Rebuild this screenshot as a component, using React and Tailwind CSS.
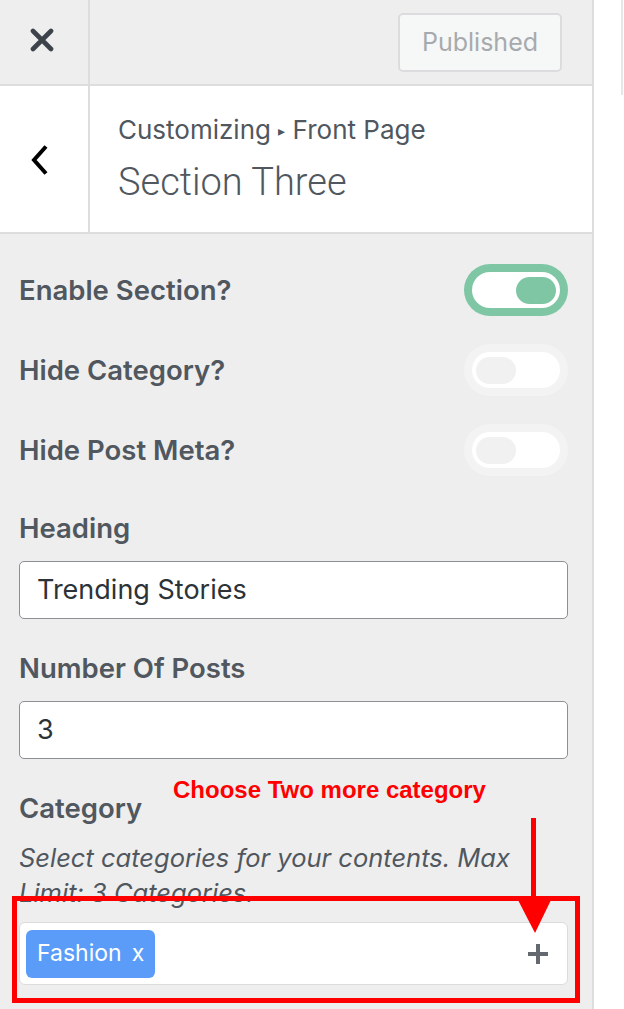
import React from "react";

const font = { fontFamily: "Inter, 'Noto Sans', sans-serif" };

const Toggle = ({ on }) => (
  <div
    className={`w-[104px] h-[52px] rounded-full p-2 shrink-0 ${
      on ? "bg-[#7ec6a4]" : "bg-[#f3f3f3]"
    }`}
  >
    <div
      className={`h-full w-full rounded-full bg-white flex items-center px-1 ${
        on ? "justify-end" : "justify-start"
      }`}
    >
      <div
        className={`w-10 h-[27px] rounded-full ${
          on ? "bg-[#7ec6a4]" : "bg-[#f1f1f1]"
        }`}
      />
    </div>
  </div>
);

const ToggleRow = ({ label, on }) => (
  <div className="flex items-center justify-between h-[52px]">
    <span className="text-[27.5px] leading-[32px] font-semibold text-[#50575e]">{label}</span>
    <Toggle on={on} />
  </div>
);

export default function App() {
  return (
    <div className="flex w-[624px] h-[1009px] overflow-hidden bg-white" style={font}>
      {/* customizer panel */}
      <div className="relative w-[594px] shrink-0 bg-[#eeeeee] border-r-2 border-[#dddddd] flex flex-col">
        {/* top bar */}
        <div className="flex h-[86px] border-b-2 border-[#dddddd] shrink-0">
          <div className="w-[90px] border-r-2 border-[#dddddd] flex items-center justify-center pb-[5px] pr-[4px]">
            <svg width="24" height="24" viewBox="0 0 24 24">
              <path
                d="M3 3 L21 21 M21 3 L3 21"
                stroke="#3c434a"
                strokeWidth="4.6"
                strokeLinecap="round"
              />
            </svg>
          </div>
          <div className="flex-1 flex justify-end items-start pt-[13px] pr-[30px]">
            <div className="w-[164px] h-[59px] rounded-[5px] border-2 border-[#dcdcde] bg-[#f6f7f7] flex items-center justify-center text-[25px] text-[#a7aaad]">
              Published
            </div>
          </div>
        </div>

        {/* section header */}
        <div className="flex h-[148px] bg-white border-b-2 border-[#dddddd] shrink-0">
          <div className="w-[90px] border-r-2 border-[#dddddd] flex items-center justify-center pr-[8px] pt-[2px]">
            <svg width="20" height="30" viewBox="0 0 20 30">
              <path
                d="M16 1.5 L4 15 L16 28.5"
                fill="none"
                stroke="#000"
                strokeWidth="4"
                strokeLinejoin="miter"
              />
            </svg>
          </div>
          <div className="flex-1 pl-[28px] pt-[28px]">
            <div className="text-[26px] leading-[32px] text-[#50575e]">
              Customizing <span className="text-[14px] relative -top-[3px]">▸</span> Front Page
            </div>
            <div
              className="text-[38px] leading-[48px] font-light text-[#50575e] mt-[8px]"
              style={{ fontFamily: "Roboto, Inter, sans-serif" }}
            >
              Section Three
            </div>
          </div>
        </div>

        {/* controls */}
        <div className="flex flex-col pl-[19px] pr-[24px] pt-[30px]">
          <div className="flex flex-col gap-[28px]">
            <ToggleRow label="Enable Section?" on />
            <ToggleRow label="Hide Category?" />
            <ToggleRow label="Hide Post Meta?" />
          </div>

          <div className="mt-[36px] text-[27.5px] leading-[32px] font-semibold text-[#50575e]">
            Heading
          </div>
          <div className="mt-[17px] h-[58px] rounded-[5px] border-[1.5px] border-[#8c8f94] bg-white flex items-center px-[17px] text-[27px] text-[#2c3338]">
            Trending Stories
          </div>

          <div className="mt-[33px] text-[27.5px] leading-[32px] font-semibold text-[#50575e]">
            Number Of Posts
          </div>
          <div className="mt-[17px] h-[58px] rounded-[5px] border-[1.5px] border-[#8c8f94] bg-white flex items-center px-[17px] text-[27px] text-[#2c3338]">
            3
          </div>

          <div className="mt-[33px] text-[27.5px] leading-[32px] font-semibold text-[#50575e]">
            Category
          </div>
          <div className="mt-[16px] text-[25.5px] leading-[35px] italic text-[#50575e]">
            Select categories for your contents. Max Limit: 3 Categories.
          </div>
          <div className="mt-[12px] h-[63px] rounded-[6px] border-[1.5px] border-[#dcdcde] bg-white flex items-center justify-between pl-[6px] pr-[18px]">
            <div className="h-[48px] px-[11px] rounded-[6px] bg-[#5b9cf8] text-white text-[23px] flex items-center gap-[10px]">
              <span>Fashion</span>
              <span>x</span>
            </div>
            <svg width="22" height="22" viewBox="0 0 22 22">
              <path d="M11 1 V21 M1 11 H21" stroke="#646970" strokeWidth="4" />
            </svg>
          </div>
        </div>

        {/* annotation */}
        <div
          className="absolute left-[173px] top-[776px] text-[24px] font-bold text-[#ff0000] leading-[28px]"
          style={{ fontFamily: "'Liberation Sans', Arial, sans-serif" }}
        >
          Choose Two more category
        </div>
        <svg
          className="absolute left-[515px] top-[816px]"
          width="40"
          height="120"
          viewBox="0 0 40 120"
        >
          <path d="M18.5 2 V86" stroke="#ff0000" strokeWidth="5" />
          <path d="M3 84 L36 84 L20 117 Z" fill="#ff0000" />
        </svg>
        <div className="absolute left-[12px] top-[896px] w-[568px] h-[107px] border-[5px] border-[#ff0000]" />
      </div>

      {/* preview edge */}
      <div className="flex-1 bg-white flex justify-end">
        <div className="w-[2px] h-[95px] bg-[#e6e6e6] mr-[1px]" />
      </div>
    </div>
  );
}
